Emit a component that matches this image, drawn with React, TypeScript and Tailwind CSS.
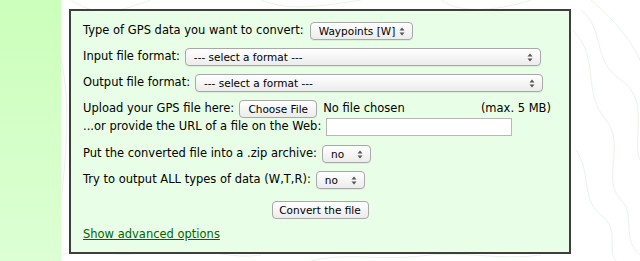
import React from 'react';

const Arrows = () => (
  <svg width="6" height="9" viewBox="0 0 6 9" className="shrink-0">
    <path d="M3 0.5 L5.5 3.5 H0.5 Z" fill="#555" />
    <path d="M3 8.5 L5.5 5.5 H0.5 Z" fill="#555" />
  </svg>
);

const FakeSelect = ({ label, className }: { label: string; className: string }) => (
  <div
    className={`flex h-[18px] items-center justify-between whitespace-nowrap rounded-[4px] border border-[#a8a8a8] bg-gradient-to-b from-white to-[#ececec] pl-[8px] pr-[7px] text-[10.5px] leading-none text-black shadow-[0_1px_0_rgba(0,0,0,0.06)] ${className}`}
  >
    <span>{label}</span>
    <Arrows />
  </div>
);

const Topo = () => (
  <svg
    className="pointer-events-none absolute inset-0 h-full w-full"
    viewBox="0 0 579 261"
    preserveAspectRatio="none"
    fill="none"
    stroke="#e9f3e9"
    strokeWidth="1"
  >
    <path d="M10 0 C40 20 60 10 90 0" />
    <path d="M200 0 C230 12 260 6 300 0" />
    <path d="M380 0 C400 15 440 10 470 0" />
    <path d="M520 10 C545 30 530 60 560 80 C590 100 570 140 579 160" />
    <path d="M530 0 C560 25 575 50 579 60" />
    <path d="M512 30 C540 60 520 90 545 120 C565 145 540 180 560 200 C575 215 560 240 579 255" />
    <path d="M515 150 C530 170 520 200 540 215 C560 230 545 250 555 261" />
    <path d="M0 255 C30 245 60 261 90 250 C130 240 160 261 200 255" />
    <path d="M250 261 C280 252 320 261 360 256 C400 250 440 261 480 255" />
    <path d="M0 60 C10 100 5 160 0 200" />
  </svg>
);

export default function App() {
  const font = { fontFamily: '"DejaVu Sans", Verdana, sans-serif' };
  return (
    <div className="flex h-[261px] w-[640px] overflow-hidden bg-white" style={font}>
      <div className="h-full w-[61px] shrink-0 bg-gradient-to-b from-[#ccffbb] to-[#dcffd4]" />
      <div className="relative flex-1 pl-[8px] pt-[9px]">
        <Topo />
        <div className="relative flex h-[245px] w-[502px] flex-col border-2 border-[#3e3e3e] bg-[#e8fee6] pl-[12px] pt-[11px] text-[11.5px] text-black">
          <div className="flex h-[18px] items-center whitespace-nowrap">
            <span>Type of GPS data you want to convert:</span>
            <FakeSelect label="Waypoints [W]" className="ml-[6px] w-[103px]" />
          </div>
          <div className="mt-[8px] flex h-[18px] items-center whitespace-nowrap">
            <span>Input file format:</span>
            <FakeSelect label="--- select a format ---" className="ml-[5px] w-[356px]" />
          </div>
          <div className="mt-[8px] flex h-[18px] items-center whitespace-nowrap">
            <span>Output file format:</span>
            <FakeSelect label="--- select a format ---" className="ml-[5px] w-[348px]" />
          </div>
          <div className="mt-[8px] flex h-[18px] items-center whitespace-nowrap">
            <span>Upload your GPS file here:</span>
            <div className="ml-[5px] flex h-[18px] w-[78px] items-center justify-center rounded-[4px] border border-[#a8a8a8] bg-gradient-to-b from-white to-[#ececec] text-[10.5px] leading-none">
              Choose File
            </div>
            <span className="ml-[6px]">No file chosen</span>
            <span className="ml-auto mr-[18px]">(max. 5 MB)</span>
          </div>
          <div className="flex h-[18px] items-center whitespace-nowrap">
            <span>...or provide the URL of a file on the Web:</span>
            <div className="ml-[5px] h-[18px] w-[186px] border border-[#b8b8b8] bg-white" />
          </div>
          <div className="mt-[9px] flex h-[18px] items-center whitespace-nowrap">
            <span>Put the converted file into a .zip archive:</span>
            <FakeSelect label="no" className="ml-[5px] w-[49px]" />
          </div>
          <div className="mt-[8px] flex h-[18px] items-center whitespace-nowrap">
            <span>Try to output ALL types of data (W,T,R):</span>
            <FakeSelect label="no" className="ml-[5px] w-[49px]" />
          </div>
          <div className="mt-[12px] flex justify-center pr-[12px]">
            <div className="flex h-[18px] w-[97px] items-center justify-center whitespace-nowrap rounded-[4px] border border-[#a8a8a8] bg-gradient-to-b from-white to-[#ececec] text-[10.5px] leading-none">
              Convert the file
            </div>
          </div>
          <a href="#" className="mt-[7px] text-[11.5px] text-[#006600] underline">
            Show advanced options
          </a>
        </div>
      </div>
    </div>
  );
}
